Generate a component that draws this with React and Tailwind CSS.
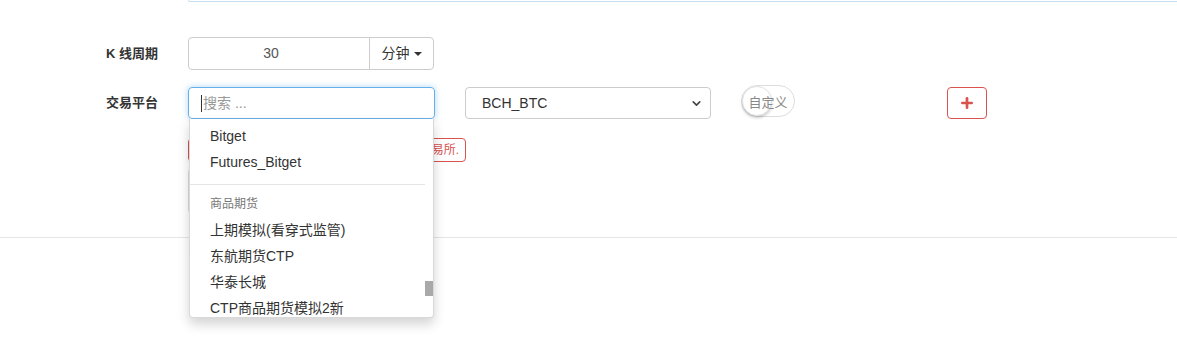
import { Plus, ChevronDown } from 'lucide-react'

const font = { fontFamily: '"Liberation Sans", "Noto Sans CJK SC", Arial, sans-serif' }

const exchanges = [
  { type: 'item', name: 'Bitget' },
  { type: 'item', name: 'Futures_Bitget' },
  { type: 'divider' },
  { type: 'header', name: '商品期货' },
  { type: 'item', name: '上期模拟(看穿式监管)' },
  { type: 'item', name: '东航期货CTP' },
  { type: 'item', name: '华泰长城' },
  { type: 'item', name: 'CTP商品期货模拟2新' },
]

function ExchangeMenu() {
  return (
    <div className="absolute left-[1px] top-full z-20 h-[199px] w-[245px] overflow-hidden rounded-b border border-t-0 border-black/15 bg-white shadow-[0_6px_12px_rgba(0,0,0,0.175)]">
      <div className="pt-[4px]">
        {exchanges.map((row, i) => {
          if (row.type === 'divider') return <div key={i} className="mb-[6px] mr-[8px] mt-[9px] h-px bg-[#e5e5e5]" />
          if (row.type === 'header') return <div key={i} className="flex h-[26px] items-center px-[20px] text-[12px] text-[#777]">{row.name}</div>
          return <div key={i} className="flex h-[26px] items-center px-[20px] text-[14px] text-[#333]">{row.name}</div>
        })}
      </div>
      <div className="absolute right-0 top-[162px] h-[15px] w-[8px] bg-[#a9a9a9]" />
    </div>
  )
}

export default function App() {
  return (
    <div className="relative h-[341px] w-[1177px] overflow-hidden bg-white text-[#333]" style={font}>
      <div className="ml-[188px] h-[2px] rounded-bl border-b border-l border-[#c6dff0]" />

      <div className="mt-[35px] flex items-center">
        <label className="w-[158px] text-right text-[13px] font-bold">K 线周期</label>
        <div className="ml-[30px] flex h-[33px] w-[246px]">
          <div className="flex flex-1 items-center justify-center rounded-l border border-[#ccc] pr-[16px] text-[14px] text-[#555]">30</div>
          <button className="-ml-px flex w-[65px] items-center justify-center gap-[4px] rounded-r border border-[#ccc] text-[14px] text-[#333]">
            分钟
            <span className="h-0 w-0 border-x-[4px] border-t-[4px] border-x-transparent border-t-[#333]" />
          </button>
        </div>
      </div>

      <div className="mt-[17px] flex items-start">
        <label className="flex h-[32px] w-[158px] items-center justify-end text-[13px] font-bold">交易平台</label>
        <div className="ml-[30px] w-[247px]">
          <div className="relative">
            <div className="flex h-[32px] items-center rounded border border-[#66afe9] px-[12px] text-[14px] text-[#999] shadow-[0_0_6px_rgba(102,175,233,0.5)]">
              <span className="mr-[1px] h-[17px] w-px bg-[#333]" />
              搜索 ...
            </div>
            <ExchangeMenu />
          </div>
          <div className="mt-[19px] w-[278px] rounded border border-[#d9534f] px-[6px] py-[2px] text-right text-[12px] text-[#d9534f]">至少需要添加一个交易所.</div>
          <div className="mt-[6px] h-[46px] w-[120px] rounded border border-[#ddd]" />
        </div>
        <div className="ml-[30px] flex h-[32px] w-[246px] items-center justify-between rounded border border-[#ccc] pl-[16px] pr-[7px] text-[14px] text-[#333]">
          BCH_BTC
          <ChevronDown size={13} strokeWidth={3} className="text-[#444]" />
        </div>
        <div className="relative ml-[30px] -mt-[2px] flex h-[32px] w-[54px] items-center justify-center rounded-full border border-[#ddd] bg-white pt-[3px]">
          <span className="absolute left-0 top-0 h-[30px] w-[30px] rounded-full border border-[#e3e3e3] bg-white shadow-[0_2px_3px_rgba(0,0,0,0.2)]" />
          <span className="relative text-[13px] text-[#888]">自定义</span>
        </div>
        <button className="ml-[152px] flex h-[32px] w-[40px] items-center justify-center rounded border border-[#d9534f] text-[#d9534f]">
          <Plus size={16} strokeWidth={4} />
        </button>
      </div>

      <div className="absolute left-0 top-[237px] w-full border-t border-[#e5e5e5]" />
    </div>
  )
}
